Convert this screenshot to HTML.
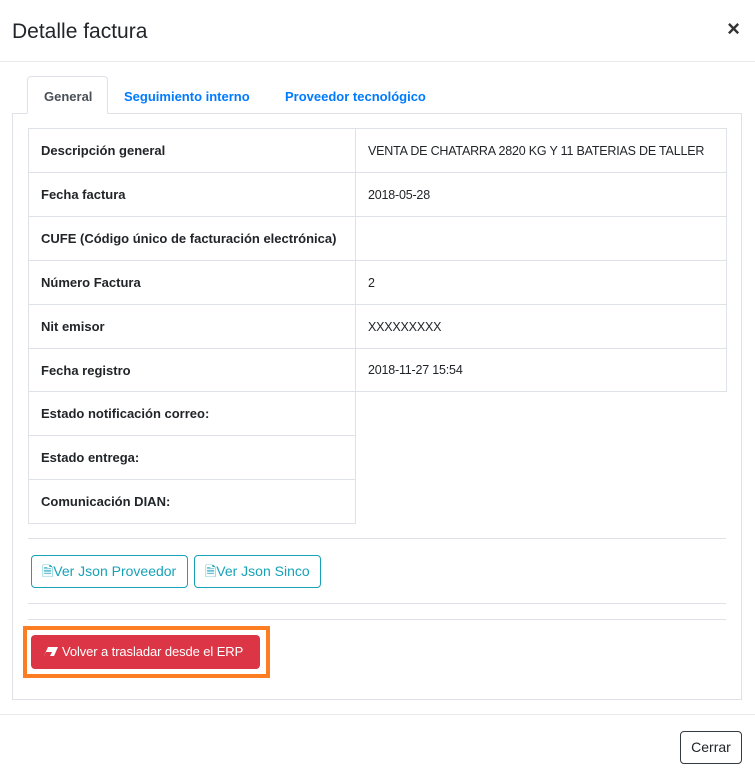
<!DOCTYPE html>
<html><head><meta charset="utf-8"><style>
*{box-sizing:border-box}
body{margin:0;width:755px;height:777px;background:#fff;font-family:"Liberation Sans",sans-serif;color:#212529;position:relative;overflow:hidden}
.a{position:absolute;white-space:nowrap}
.title{left:12px;top:20px;font-size:21px;color:#212529}
.close{right:15px;top:16px;font-size:22px;font-weight:bold;color:#333}
.hl{left:0;width:755px;height:1px;background:#e9ecef}
.tab{top:78px;height:38px;font-size:13px;font-weight:bold;line-height:38px;color:#007bff}
.panel{left:12px;top:113px;width:730px;height:587px;border:1px solid #dee2e6}
table{position:absolute;left:28px;top:128px;border-collapse:collapse;font-size:13px}
td{border:1px solid #dee2e6;height:44px;padding:0 12px;vertical-align:middle;white-space:nowrap}
td.k{width:327px;font-weight:bold}
td.v{width:371px;font-size:12.5px;letter-spacing:-0.2px}
.btn{border:1px solid #17a2b8;color:#17a2b8;border-radius:4px;font-size:14px;height:33px;line-height:31px;padding:0 0 0 10px}
</style></head><body>
<div class="a title">Detalle factura</div>
<div class="a close">×</div>
<div class="a hl" style="top:61px"></div>
<div class="a panel"></div>
<div class="a" style="left:27px;top:76px;width:81px;height:38px;border:1px solid #dee2e6;border-bottom:1px solid #fff;border-radius:4px 4px 0 0;background:#fff"></div>
<div class="a tab" style="left:44px;color:#495057">General</div>
<div class="a tab" style="left:124px">Seguimiento interno</div>
<div class="a tab" style="left:285px">Proveedor tecnológico</div>
<table>
<tr><td class="k">Descripción general</td><td class="v">VENTA DE CHATARRA 2820 KG Y 11 BATERIAS DE TALLER</td></tr>
<tr><td class="k">Fecha factura</td><td class="v">2018-05-28</td></tr>
<tr><td class="k">CUFE (Código único de facturación electrónica)</td><td class="v"></td></tr>
<tr><td class="k">Número Factura</td><td class="v">2</td></tr>
<tr><td class="k">Nit emisor</td><td class="v">XXXXXXXXX</td></tr>
<tr><td class="k" style="height:43px">Fecha registro</td><td class="v" style="height:43px">2018-11-27 15:54</td></tr>
<tr><td class="k">Estado notificación correo:</td><td style="border:none"></td></tr>
<tr><td class="k">Estado entrega:</td><td style="border:none"></td></tr>
<tr><td class="k">Comunicación DIAN:</td><td style="border:none"></td></tr>
</table>
<div class="a" style="left:28px;top:538px;width:698px;height:1px;background:#dee2e6"></div>
<div class="a btn" style="left:31px;top:555px;width:157px">&#128462;Ver Json Proveedor</div>
<div class="a btn" style="left:194px;top:555px;width:127px">&#128462;Ver Json Sinco</div>
<div class="a" style="left:28px;top:603px;width:698px;height:1px;background:#dee2e6"></div>
<div class="a" style="left:28px;top:619px;width:698px;height:1px;background:#dee2e6"></div>
<div class="a" style="left:23px;top:626px;width:247px;height:52px;border:4px solid #fd7e22"></div>
<div class="a" style="left:31px;top:635px;width:229px;height:34px;background:#dc3545;border-radius:4px;color:#fff;font-size:13px;letter-spacing:-0.1px;line-height:34px;padding-left:31px">Volver a trasladar desde el ERP</div>
<svg class="a" style="left:43px;top:646px" width="16" height="12"><path d="M5 1H15L11 10H1Z" fill="#fff"/><path d="M3 6H9L7 10H1Z" fill="#dc3545"/></svg>
<div class="a hl" style="top:714px"></div>
<div class="a" style="left:680px;top:731px;width:62px;height:33px;border:1px solid #343a40;border-radius:4px;font-size:14px;line-height:31px;text-align:center">Cerrar</div>
</body></html>
